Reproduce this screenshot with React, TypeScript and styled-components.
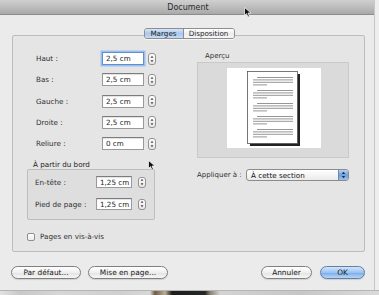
import React from "react";
import styled, { createGlobalStyle, css } from "styled-components";

const GlobalStyle = createGlobalStyle`
  html, body { margin: 0; padding: 0; background: #ececec; }
  body { width: 379px; height: 295px; overflow: hidden; font-family: "DejaVu Sans", "Liberation Sans", sans-serif; }
`;

const Screen = styled.div`
  position: relative;
  width: 379px;
  height: 295px;
  display: flex;
  flex-direction: column;
  background: #eeeeee;
`;

const Window = styled.div`
  width: 375px;
  display: flex;
  flex-direction: column;
  background: #ebebeb;
  border-right: 1px solid #c6c6c6;
  box-sizing: border-box;
`;

const TitleBar = styled.div`
  height: 15px;
  box-sizing: border-box;
  background: linear-gradient(#d0d0d0, #b9b9b9 60%, #a9a9a9);
  border-bottom: 1px solid #8c8c8c;
  display: flex;
  align-items: center;
  justify-content: center;
  font-size: 8px;
  color: #2a2a2a;
  padding-left: 2px;
`;

const TabsRow = styled.div`
  display: flex;
  justify-content: center;
  margin-top: 13px;
  padding-left: 4px;
  position: relative;
  z-index: 1;
`;

const Tabs = styled.div`
  display: flex;
  height: 11px;
  border: 1px solid #8e8e8e;
  border-radius: 3px;
  overflow: hidden;
  box-sizing: border-box;
  box-shadow: 0 1px 0 rgba(255,255,255,0.6);
`;

const Tab = styled.div<{ $active?: boolean }>`
  display: flex;
  align-items: center;
  justify-content: center;
  font-size: 7.2px;
  color: #1f1f1f;
  padding: 0 4px;
  ${(p) =>
    p.$active
      ? css`
          width: 30px;
          background: linear-gradient(#d6e6f8, #a9c8ee 50%, #c4dbf5);
          border-right: 1px solid #7f8fa6;
        `
      : css`
          width: 42px;
          background: linear-gradient(#ffffff, #ececec 55%, #f6f6f6);
        `}
`;

const GroupBox = styled.div`
  margin: -4px 9px 0 12px;
  height: 217px;
  box-sizing: border-box;
  border: 1px solid #bcbcbc;
  border-radius: 2px;
  background: #e5e5e5;
  display: grid;
  grid-template-columns: 184px 152px;
  padding-top: 16px;
`;

const LeftCol = styled.div`
  display: flex;
  flex-direction: column;
  padding-left: 14px;
`;

const FormGrid = styled.div`
  display: grid;
  grid-template-columns: 62px 42px 8px;
  column-gap: 4px;
  row-gap: 8.3px;
  margin-left: 9px;
  align-items: center;
`;

const Label = styled.span`
  font-size: 7.2px;
  color: #303030;
  white-space: nowrap;
`;

const Input = styled.div<{ $focused?: boolean }>`
  height: 13px;
  box-sizing: border-box;
  background: #fff;
  border: 1px solid #9a9a9a;
  border-top-color: #7c7c7c;
  box-shadow: inset 0 1px 1px rgba(0,0,0,0.12);
  font-size: 7.2px;
  color: #222;
  display: flex;
  align-items: center;
  padding-left: 3px;
  ${(p) =>
    p.$focused &&
    css`
      border-color: #5d8fd1;
      box-shadow: 0 0 0 1.5px #9cc0ee;
    `}
`;

const StepperBox = styled.div<{ $h?: number }>`
  width: 8px;
  height: ${(p) => p.$h ?? 12}px;
  box-sizing: border-box;
  border: 1px solid #929292;
  border-radius: 3px;
  background: linear-gradient(#ffffff, #e6e6e6);
  display: flex;
  align-items: center;
  justify-content: center;
`;

const Stepper = ({ h }: { h?: number }) => (
  <StepperBox $h={h}>
    <svg width="4" height="8" viewBox="0 0 4 8">
      <path d="M2 0.8 L3.4 2.8 L0.6 2.8 Z" fill="#444" />
      <path d="M2 7.2 L3.4 5.2 L0.6 5.2 Z" fill="#444" />
    </svg>
  </StepperBox>
);

const SectionLabel = styled.div`
  font-size: 7.2px;
  color: #222;
  margin: 10px 0 0 6px;
  height: 9px;
  line-height: 9px;
`;

const InnerBox = styled.div`
  width: 128px;
  height: 51px;
  box-sizing: border-box;
  border: 1px solid #bdbdbd;
  border-radius: 2px;
  background: #dedede;
  padding: 6px 0 0 7px;
  display: grid;
  grid-template-columns: 55px 36px 8px;
  column-gap: 6px;
  row-gap: 10px;
  align-items: center;
  align-content: start;
`;

const SmallInput = styled(Input)`
  height: 12px;
`;

const CheckRow = styled.div`
  display: flex;
  align-items: center;
  gap: 5px;
  margin-top: 12px;
`;

const Checkbox = styled.div`
  width: 8px;
  height: 8px;
  box-sizing: border-box;
  border: 1px solid #8f8f8f;
  border-radius: 2px;
  background: linear-gradient(#ffffff, #ececec);
`;

const RightCol = styled.div`
  display: flex;
  flex-direction: column;
`;

const PreviewLabel = styled.div`
  font-size: 7px;
  color: #333;
  height: 9px;
  line-height: 9px;
  margin: 0 0 1px 8px;
`;

const PreviewBox = styled.div`
  height: 96px;
  box-sizing: border-box;
  border: 1px solid #c9c9c9;
  background: #dadada;
  display: flex;
  justify-content: center;
  padding: 5px 0 0 2px;
`;

const PreviewPaper = styled.div`
  width: 94px;
  height: 80px;
  background: #ffffff;
  display: flex;
  justify-content: center;
  padding-top: 3px;
  box-sizing: border-box;
`;

const PageDrawing = () => {
  const groups = [0, 1, 2, 3, 4];
  return (
    <svg width="54" height="76" viewBox="0 0 54 76">
      <rect x="3" y="3" width="50" height="72" fill="#222" />
      <rect x="0.5" y="0.5" width="50" height="72" fill="#fff" stroke="#555" strokeWidth="0.8" />
      {groups.map((g) => {
        const y = 6.5 + g * 13;
        return (
          <g key={g} stroke="#8a8a8a" strokeWidth="0.9">
            <line x1="10" y1={y} x2="46" y2={y} />
            <line x1="6" y1={y + 2.4} x2="46" y2={y + 2.4} />
            <line x1="6" y1={y + 4.8} x2="46" y2={y + 4.8} />
            <line x1="6" y1={y + 7.4} x2="20" y2={y + 7.4} />
          </g>
        );
      })}
    </svg>
  );
};

const ApplyRow = styled.div`
  display: flex;
  align-items: center;
  margin-top: 11px;
`;

const ApplyLabel = styled(Label)`
  width: 49px;
  font-size: 7px;
`;

const Popup = styled.div`
  width: 103px;
  height: 12px;
  box-sizing: border-box;
  border: 1px solid #8c8c8c;
  border-radius: 3px;
  background: linear-gradient(#ffffff, #eaeaea);
  display: flex;
  align-items: stretch;
  overflow: hidden;
`;

const PopupText = styled.div`
  flex: 1;
  font-size: 7.2px;
  color: #111;
  display: flex;
  align-items: center;
  padding-left: 4px;
`;

const PopupArrows = styled.div`
  width: 9px;
  background: linear-gradient(#b6d2f3, #6f9fdc 50%, #9cc0ee);
  border-left: 1px solid #6a88b0;
  display: flex;
  align-items: center;
  justify-content: center;
`;

const ButtonRow = styled.div`
  display: flex;
  align-items: center;
  margin-top: 14px;
  padding: 0 9px 11px 11px;
`;

const ButtonGroup = styled.div<{ $gap: number }>`
  display: flex;
  gap: ${(p) => p.$gap}px;
`;

const Spacer = styled.div`
  flex: 1;
`;

const Button = styled.div<{ $w: number; $default?: boolean }>`
  width: ${(p) => p.$w}px;
  height: 13px;
  box-sizing: border-box;
  border: 1px solid #7f7f7f;
  border-radius: 7px;
  display: flex;
  align-items: center;
  justify-content: center;
  font-size: 7.4px;
  color: #1a1a1a;
  background: linear-gradient(#ffffff, #efefef 50%, #e2e2e2 51%, #f7f7f7);
  box-shadow: 0 1px 1px rgba(0,0,0,0.12);
  ${(p) =>
    p.$default &&
    css`
      border-color: #5f7fa8;
      background: linear-gradient(#d3e5f9, #9cc3f0 50%, #78aae8 51%, #b7d6f7);
    `}
`;

const DesktopStrip = styled.div`
  flex: 1;
  border-top: 1px solid #b5b5b5;
  background: linear-gradient(
    90deg,
    #e2e2e2 0,
    #c8c8c8 20px,
    #d6d6d6 60px,
    #cfcfcf 120px,
    #d8d8d8 150px,
    #6f5a40 155px,
    #bcae94 165px,
    #1d1d1d 172px,
    #262626 205px,
    #8a8070 210px,
    #d3d3d3 220px,
    #c6c6c6 300px,
    #dadada 379px
  );
`;

const Cursor = styled.svg<{ $x: number; $y: number }>`
  position: absolute;
  left: ${(p) => p.$x}px;
  top: ${(p) => p.$y}px;
`;

const Arrow = ({ x, y }: { x: number; y: number }) => (
  <Cursor $x={x} $y={y} width="8" height="11" viewBox="0 0 8 11">
    <path d="M0.5 0.5 L0.5 8.5 L2.5 6.6 L4 10 L5.4 9.4 L4 6 L7 6 Z" fill="#111" stroke="#fff" strokeWidth="0.7" />
  </Cursor>
);

const mainRows = [
  { label: "Haut :", value: "2,5 cm", focused: true },
  { label: "Bas :", value: "2,5 cm" },
  { label: "Gauche :", value: "2,5 cm" },
  { label: "Droite :", value: "2,5 cm" },
  { label: "Reliure :", value: "0 cm" },
];

const edgeRows = [
  { label: "En-tête :", value: "1,25 cm" },
  { label: "Pied de page :", value: "1,25 cm" },
];

export default function App() {
  return (
    <>
      <GlobalStyle />
      <Screen>
        <Window>
          <TitleBar>Document</TitleBar>
          <TabsRow>
            <Tabs>
              <Tab $active>Marges</Tab>
              <Tab>Disposition</Tab>
            </Tabs>
          </TabsRow>
          <GroupBox>
            <LeftCol>
              <FormGrid>
                {mainRows.map((r) => (
                  <React.Fragment key={r.label}>
                    <Label>{r.label}</Label>
                    <Input $focused={r.focused}>{r.value}</Input>
                    <Stepper />
                  </React.Fragment>
                ))}
              </FormGrid>
              <SectionLabel>À partir du bord</SectionLabel>
              <InnerBox>
                {edgeRows.map((r) => (
                  <React.Fragment key={r.label}>
                    <Label>{r.label}</Label>
                    <SmallInput>{r.value}</SmallInput>
                    <Stepper h={11} />
                  </React.Fragment>
                ))}
              </InnerBox>
              <CheckRow>
                <Checkbox />
                <Label>Pages en vis-à-vis</Label>
              </CheckRow>
            </LeftCol>
            <RightCol>
              <PreviewLabel>Aperçu</PreviewLabel>
              <PreviewBox>
                <PreviewPaper>
                  <PageDrawing />
                </PreviewPaper>
              </PreviewBox>
              <ApplyRow>
                <ApplyLabel>Appliquer à :</ApplyLabel>
                <Popup>
                  <PopupText>À cette section</PopupText>
                  <PopupArrows>
                    <svg width="5" height="8" viewBox="0 0 5 8">
                      <path d="M2.5 0.8 L4.2 3 L0.8 3 Z" fill="#1a2a44" />
                      <path d="M2.5 7.2 L4.2 5 L0.8 5 Z" fill="#1a2a44" />
                    </svg>
                  </PopupArrows>
                </Popup>
              </ApplyRow>
            </RightCol>
          </GroupBox>
          <ButtonRow>
            <ButtonGroup $gap={7}>
              <Button $w={70}>Par défaut...</Button>
              <Button $w={80}>Mise en page...</Button>
            </ButtonGroup>
            <Spacer />
            <ButtonGroup $gap={8}>
              <Button $w={51}>Annuler</Button>
              <Button $w={45} $default>OK</Button>
            </ButtonGroup>
          </ButtonRow>
        </Window>
        <DesktopStrip />
        <Arrow x={244} y={7} />
        <Arrow x={148} y={160} />
      </Screen>
    </>
  );
}
